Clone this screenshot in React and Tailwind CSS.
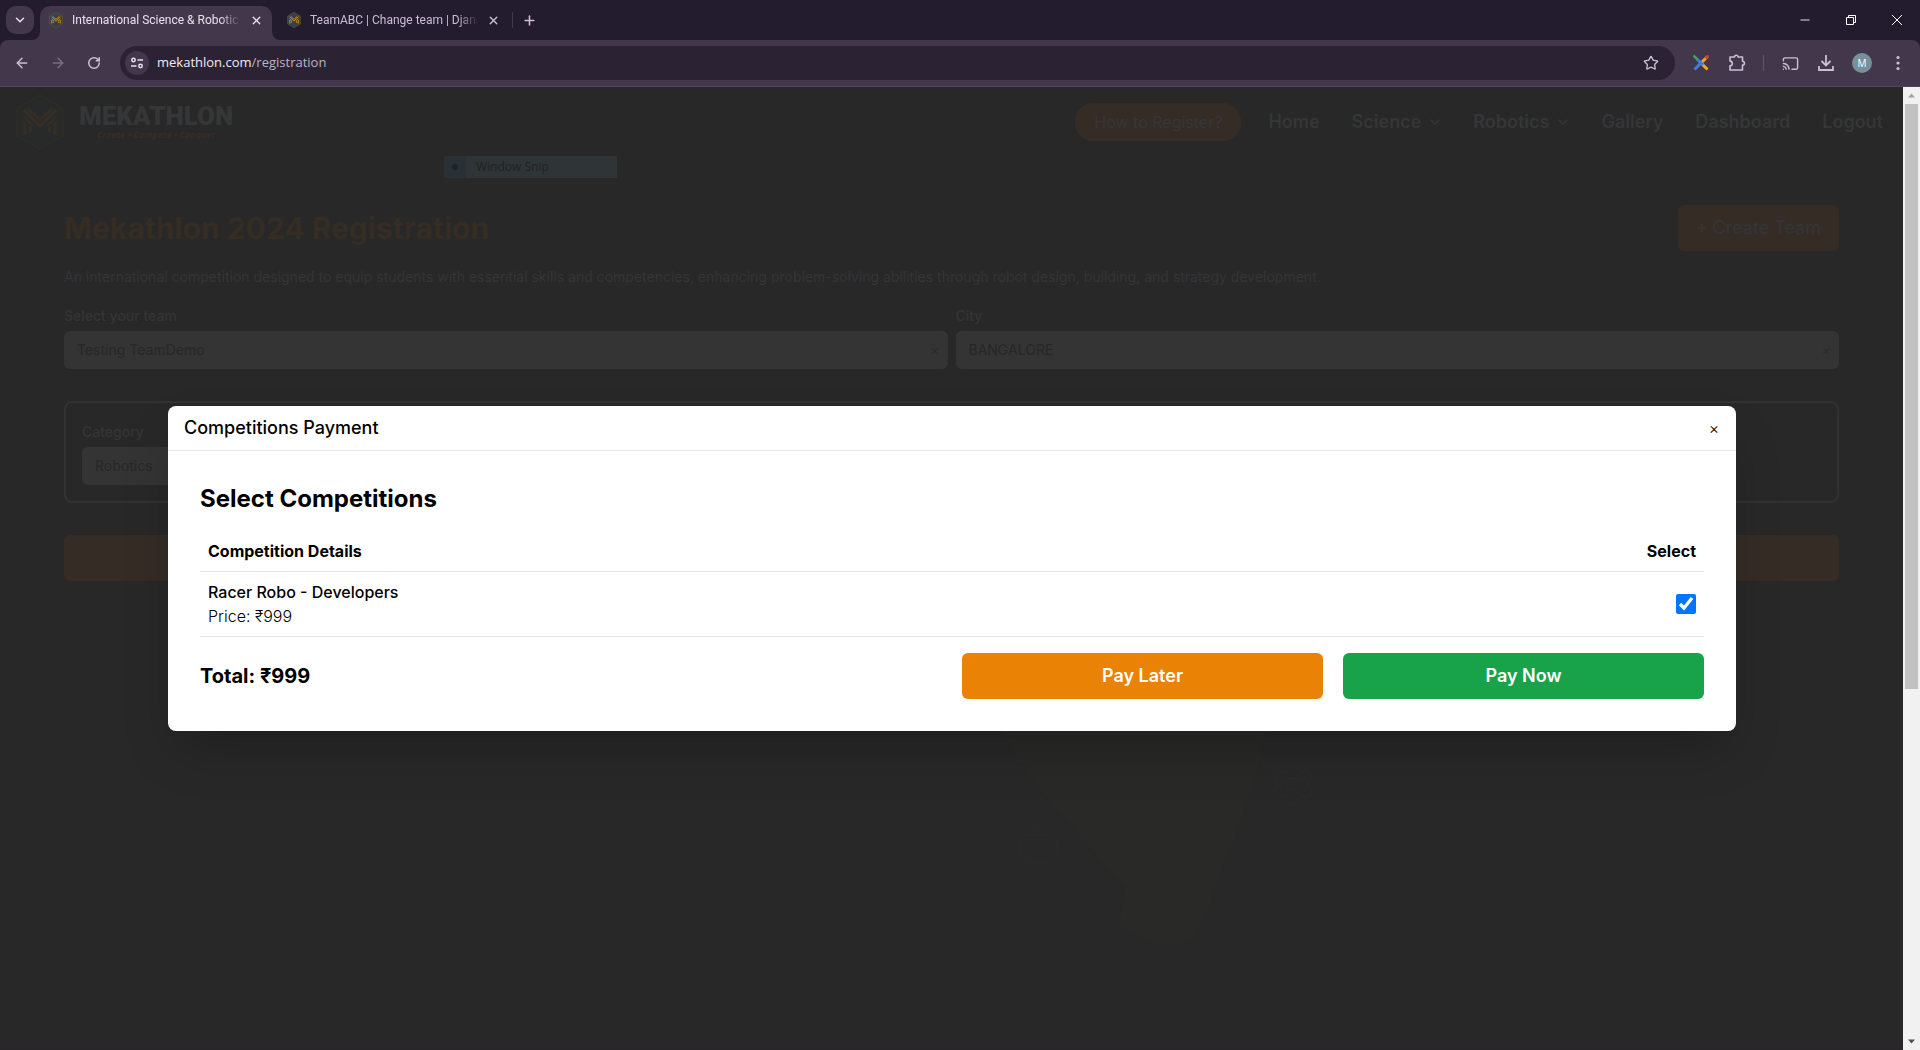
import { ChevronDown, ArrowLeft, ArrowRight, RotateCw, X, Plus, Star, Minus, Cast, Settings, Bot, Users, GraduationCap } from "lucide-react";

function LogoMark({ className, edge, fill, stripe }) {
  return (
    <svg className={className} viewBox="0 0 46 54" aria-hidden="true">
      <path d="M23 1 45 13.500v27L23 53 1 40.500v-27z" fill={fill} stroke={edge} strokeWidth="1" />
      <g fill="none" stroke={stripe} strokeWidth="3">
        <path d="M12 14.500 23 25l11-10.500" />
        <path d="M7.500 15.500 23 31l15.500-15.500" />
        <path d="M7.500 22 16 30.500M38.500 22 30 30.500" strokeWidth="2.500" />
        <path d="M8.500 27v12M14 31v6M37.500 27v12M32 31v6" />
      </g>
    </svg>
  );
}

function Favicon() {
  return <LogoMark className="h-4 w-4 shrink-0" edge="#a87224" fill="#33414a" stripe="#e08f18" />;
}

function Tab({ title, active }) {
  return (
    <div
      role="tab"
      aria-selected={active}
      className={
        active
          ? "relative flex h-[34px] w-[232px] items-center rounded-t-[10px] bg-[#43384b] px-2 pb-1.5 text-[#e9e1ee]"
          : "flex h-[34px] w-[236px] items-center pb-1.5 pl-[14px] pr-[7px] text-[#cbbcd6]"
      }
    >
      {active && (
        <>
          <svg className="absolute -left-2 bottom-0 h-2 w-2" viewBox="0 0 8 8" aria-hidden="true"><path d="M8 0v8H0a8 8 0 0 0 8-8z" fill="#43384b" /></svg>
          <svg className="absolute -right-2 bottom-0 h-2 w-2" viewBox="0 0 8 8" aria-hidden="true"><path d="M0 0v8h8a8 8 0 0 1-8-8z" fill="#43384b" /></svg>
        </>
      )}
      <Favicon />
      <span className="ml-2 w-[168px] overflow-hidden whitespace-nowrap font-['Roboto',sans-serif] text-xs [mask-image:linear-gradient(to_right,black_88%,transparent)]">
        {title}
      </span>
      <button type="button" aria-label={"Close " + title} className="ml-auto flex h-4 w-4 shrink-0 items-center justify-center">
        <X size={13} strokeWidth={2.5} />
      </button>
    </div>
  );
}

function BrowserChrome() {
  return (
    <div className="bg-[#231b2e] font-['Open_Sans','Noto_Sans',sans-serif] text-[#cdbdd8]">
      <div className="flex h-10 items-end">
        <button type="button" aria-label="Search tabs" className="mx-1.5 mb-1.5 flex h-7 w-7 items-center justify-center rounded-[10px] bg-[#43384b] text-[#e9e1ee]">
          <ChevronDown size={14} strokeWidth={2.5} />
        </button>
        <div role="tablist" className="flex">
          <Tab title="International Science & Robotics" active />
          <Tab title="TeamABC | Change team | Django" active={false} />
        </div>
        <div className="mb-3 ml-1 h-4 w-px bg-[#43384b]" />
        <button type="button" aria-label="New tab" className="mb-2.5 ml-1.5 flex h-5 w-5 items-center justify-center">
          <Plus size={15} strokeWidth={2.5} />
        </button>
        <div className="ml-auto flex h-10 text-white">
          <button type="button" aria-label="Minimize" className="flex w-[46px] items-center justify-center"><Minus size={14} strokeWidth={1.5} /></button>
          <button type="button" aria-label="Restore" className="flex w-[46px] items-center justify-center">
            <svg width="10" height="10" viewBox="0 0 10 10" fill="none" stroke="currentColor"><path d="M.5 2.500h7v7h-7zM2.500 2.500v-2h7v7h-2" /></svg>
          </button>
          <button type="button" aria-label="Close window" className="flex w-[46px] items-center justify-center">
            <svg width="10" height="10" viewBox="0 0 10 10" stroke="currentColor"><path d="m0 0 10 10M10 0 0 10" /></svg>
          </button>
        </div>
      </div>
      <div className="flex h-[47px] items-center rounded-t-lg border-b border-[#52475a] bg-[#43384b] px-3">
        <div className="flex gap-4">
          <button type="button" aria-label="Back" className="flex h-5 w-5 items-center justify-center"><ArrowLeft size={16} strokeWidth={2.2} /></button>
          <button type="button" aria-label="Forward" className="flex h-5 w-5 items-center justify-center text-[#7b6e84]"><ArrowRight size={16} strokeWidth={2.2} /></button>
          <button type="button" aria-label="Reload" className="flex h-5 w-5 items-center justify-center"><RotateCw size={14} strokeWidth={2.6} /></button>
        </div>
        <div className="ml-4 flex h-[34px] flex-1 items-center rounded-full bg-[#2b2233] pl-[5px] pr-3.5">
          <button type="button" aria-label="Site information" className="flex h-6 w-6 items-center justify-center rounded-full bg-[#43384b] text-[#e9e1ee]">
            <svg width="12" height="12" viewBox="0 0 12 12" fill="none" stroke="currentColor" strokeWidth="1.500"><circle cx="2.500" cy="3" r="1.700" /><path d="M6.500 3H12M0 9h5.500" /><circle cx="9.500" cy="9" r="1.700" /></svg>
          </button>
          <div className="ml-2 text-[13px] text-[#bdb3c4]"><span className="text-[#f1ebf5]">mekathlon.com</span>/registration</div>
          <button type="button" aria-label="Bookmark this page" className="ml-auto flex h-5 w-5 items-center justify-center"><Star size={16} strokeWidth={2} /></button>
        </div>
        <div className="ml-4 flex items-center">
          <button type="button" aria-label="Colour tools extension" className="flex h-5 w-5 items-center justify-center">
            <svg width="16" height="16" viewBox="0 0 16 16" strokeWidth="3"><path d="M14.500 1.500 8 8" stroke="#f5a623" /><path d="M8 8 1.500 14.500" stroke="#3f7fd6" /><path d="m4 4 4 4" stroke="#3f7fd6" /><path d="m8.500 8.500 6 6" stroke="#f5a623" /><path d="m0.500 0.500 4 4" stroke="#3aa657" strokeWidth="2.500" /><path d="m15.500.5-3 3" stroke="#d93a3a" strokeWidth="2.500" /><path d="m6 6 4 4" stroke="#3f7fd6" /></svg>
          </button>
          <button type="button" aria-label="Extensions" className="ml-4 flex h-5 w-5 items-center justify-center">
            <svg width="18" height="18" viewBox="0 0 18 18" fill="none" stroke="currentColor" strokeWidth="1.600" strokeLinejoin="round"><path d="M2 3h4.500a1.800 1.800 0 0 1 3.600 0H14.500v4.300a1.900 1.900 0 0 1 0 3.800V16H2v-4.300a2.300 2.300 0 0 0 0-4.600z" /></svg>
          </button>
          <div className="mx-4 h-4 w-px bg-[#62566b]" />
          <button type="button" aria-label="Cast" className="flex h-5 w-5 items-center justify-center"><Cast size={17} strokeWidth={2} /></button>
          <button type="button" aria-label="Downloads" className="ml-4 flex h-5 w-5 items-center justify-center">
            <svg width="16" height="16" viewBox="0 0 16 16" fill="none" stroke="currentColor" strokeWidth="1.800"><path d="M8 0v10M3.500 6 8 10.500 12.500 6M1 11v4h14v-4" /></svg>
          </button>
          <button type="button" aria-label="Profile" className="ml-4 flex h-5 w-5 items-center justify-center rounded-full bg-[#78909c] text-[10px] text-white">M</button>
          <button type="button" aria-label="Menu" className="ml-4 flex h-5 w-5 items-center justify-center">
            <svg width="4" height="16" viewBox="0 0 4 16" fill="currentColor"><circle cx="2" cy="2.500" r="1.600" /><circle cx="2" cy="8" r="1.600" /><circle cx="2" cy="13.500" r="1.600" /></svg>
          </button>
        </div>
      </div>
    </div>
  );
}

function Backdrop() {
  return (
    <div className="absolute inset-0 overflow-hidden text-[#2a2a2a]" aria-hidden="true">
      <svg className="absolute left-[1000px] top-[643px]" width="270" height="220" viewBox="0 0 270 220"><path d="M0 0h266l-12 50-28 80-24 62q-12 26-40 24l-44-18 8-38-26-30L40 60z" fill="#292927" /></svg>
      <Bot size={54} strokeWidth={1} className="absolute left-[1012px] top-[730px] text-[#292929]" />
      <Settings size={50} strokeWidth={1} className="absolute left-[1268px] top-[672px]" />
      <Users size={60} strokeWidth={1} className="absolute left-[970px] top-[825px] text-[#292929]" />
      <GraduationCap size={44} strokeWidth={1} className="absolute left-[1152px] top-[58px] text-[#292929]" />
    </div>
  );
}

function SiteHeader() {
  return (
    <header className="flex h-[70px] items-center justify-between pl-4 pr-5 text-[#353637]">
      <a href="#home" className="flex items-center">
        <LogoMark className="h-14 w-12" edge="#322d25" fill="#282a2a" stripe="#352e25" />
        <span className="ml-[15px] flex flex-col items-center">
          <span className="font-['Roboto',sans-serif] text-[26px] font-black leading-[26px]">MEKATHLON</span>
          <span className="font-['Open_Sans',sans-serif] text-[9px] font-bold italic leading-3 text-[#382e23]">Create • Compete • Conquer</span>
        </span>
      </a>
      <nav className="flex items-center gap-8 text-lg font-semibold">
        <button type="button" className="-mr-[5px] h-[38px] rounded-[18px] bg-[#352c26] px-[19px] text-base font-normal">How to Register?</button>
        <a href="#home">Home</a>
        <button type="button" className="-mr-0.5 flex items-center gap-1.5">Science<ChevronDown size={16} /></button>
        <button type="button" className="-mr-0.5 flex items-center gap-1.5">Robotics<ChevronDown size={16} /></button>
        <a href="#gallery">Gallery</a>
        <a href="#dashboard">Dashboard</a>
        <a href="#logout">Logout</a>
      </nav>
    </header>
  );
}

function Field({ id, label, value }) {
  return (
    <div className="flex flex-1 flex-col">
      <label htmlFor={id} className="text-sm font-medium leading-[22px]">{label}</label>
      <div className="mt-1 flex h-[38px] items-center rounded-md bg-[#343434] pl-[13px] pr-[7px] text-[#272727]">
        <input id={id} type="text" defaultValue={value} className="min-w-0 flex-1 bg-transparent text-sm" />
        <button type="button" aria-label={"Clear " + label} className="w-3 text-sm font-light text-[#2a2a2a]">×</button>
      </div>
    </div>
  );
}

function RegistrationPage() {
  return (
    <div className="relative text-[#343536]">
      <SiteHeader />
      <div className="absolute left-[444px] top-[69px] flex h-[22px] w-[173px] items-center bg-[#2f3436] font-['Open_Sans',sans-serif] text-xs text-[#222]">
        <span className="flex h-full w-[22px] items-center justify-center bg-[#2a3038]"><span className="h-1.5 w-1.5 rounded-full bg-[#222]" /></span>
        <span className="ml-2.5">Window Snip</span>
      </div>
      <main className="px-16 pt-12">
        <div className="flex items-center justify-between">
          <h1 className="text-3xl font-bold text-[#352c23]">Mekathlon 2024 Registration</h1>
          <button type="button" className="h-[46px] rounded-md bg-[#352c26] px-[18px] text-lg">+ Create Team</button>
        </div>
        <p className="mt-4 text-sm leading-5">
          An international competition designed to equip students with essential skills and competencies, enhancing problem-solving abilities through robot design, building, and strategy development.
        </p>
        <div className="mt-[18px] flex gap-2">
          <Field id="team" label="Select your team" value="Testing TeamDemo" />
          <Field id="city" label="City" value="BANGALORE" />
        </div>
        <section className="mt-8 rounded-lg border-2 border-[#323232] px-4 pb-4 pt-[18px]">
          <div className="flex w-1/2">
            <Field id="category" label="Category" value="Robotics" />
          </div>
        </section>
        <button type="button" aria-label="Register" className="mt-8 h-[46px] w-full rounded-md bg-[#352c26]" />
      </main>
    </div>
  );
}

function PaymentDialog() {
  return (
    <div className="absolute inset-0 flex items-center justify-center pl-[168px] pr-[167px]">
      <div role="dialog" aria-labelledby="dialog-title" className="w-full rounded-lg bg-white text-black shadow-2xl">
        <div className="flex h-[45px] items-center justify-between border-b border-gray-200 px-4">
          <h2 id="dialog-title" className="text-lg font-medium">Competitions Payment</h2>
          <button type="button" aria-label="Close" className="w-3 text-base font-light">×</button>
        </div>
        <div className="p-8">
          <h3 className="text-2xl font-bold">Select Competitions</h3>
          <table className="mt-4 w-full">
            <thead>
              <tr className="border-b border-gray-200">
                <th scope="col" className="p-2 text-left font-bold">Competition Details</th>
                <th scope="col" className="p-2 text-right font-bold">Select</th>
              </tr>
            </thead>
            <tbody>
              <tr className="border-b border-gray-200">
                <td className="p-2">
                  <label htmlFor="racer" className="block font-medium">Racer Robo - Developers</label>
                  <span className="block font-light">Price: ₹999</span>
                </td>
                <td className="p-2">
                  <input id="racer" type="checkbox" defaultChecked className="ml-auto block h-5 w-5" />
                </td>
              </tr>
            </tbody>
          </table>
          <div className="mt-4 grid grid-cols-4 items-center gap-5">
            <div className="col-span-2 text-xl font-bold">Total: ₹999</div>
            <button type="button" className="h-[46px] rounded-md bg-[#ea8205] text-lg font-semibold text-white">Pay Later</button>
            <button type="button" className="h-[46px] rounded-md bg-[#18a34a] text-lg font-semibold text-white">Pay Now</button>
          </div>
        </div>
      </div>
    </div>
  );
}

function Scrollbar() {
  return (
    <div className="flex w-[17px] shrink-0 flex-col items-center bg-[#f1f1f1]" aria-hidden="true">
      <svg className="my-[5px] shrink-0" width="7" height="7" viewBox="0 0 7 7"><path d="m0 5.500 3.500-4 3.500 4z" fill="#a3a3a3" /></svg>
      <div className="flex w-full flex-1 flex-col px-0.5">
        <div className="h-[63%] bg-[#c1c1c1]" />
      </div>
      <svg className="my-[5px] shrink-0" width="7" height="7" viewBox="0 0 7 7"><path d="m0 1.500 3.500 4 3.500-4z" fill="#505050" /></svg>
    </div>
  );
}

export default function App() {
  return (
    <div className="flex h-screen flex-col font-['Inter',sans-serif]">
      <BrowserChrome />
      <div className="flex min-h-0 flex-1">
        <div className="relative flex-1 overflow-hidden border-b border-[#2e222e] bg-[#282828]">
          <Backdrop />
          <RegistrationPage />
          <PaymentDialog />
        </div>
        <Scrollbar />
      </div>
    </div>
  );
}
